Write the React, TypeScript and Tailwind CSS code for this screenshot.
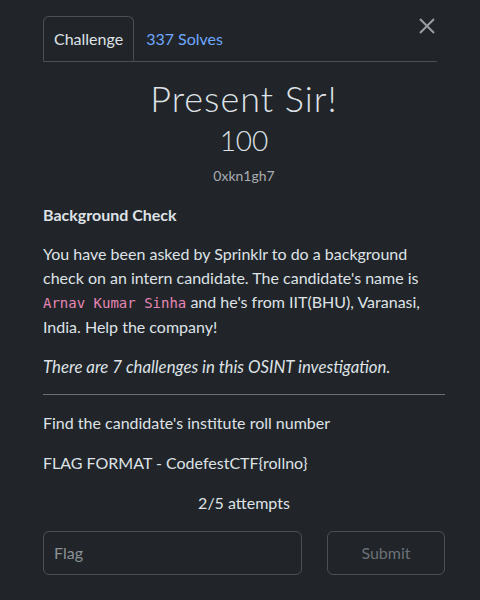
export default function App() {
  return (
    <div
      className="relative w-[480px] h-[600px] bg-[#212529] text-[#dee2e6] pl-[43px] pr-[35px] overflow-hidden"
      style={{ fontFamily: "Lato, 'Noto Sans', sans-serif" }}
    >
      <button className="absolute left-[419px] top-[18px] w-4 h-4 text-[#9a9da1]">
        <svg viewBox="0 0 16 16" width="16" height="16" fill="none" stroke="currentColor" strokeWidth="2">
          <path d="M1 1L15 15M15 1L1 15" />
        </svg>
      </button>

      <ul className="flex pt-4 mr-[8px] border-b border-[#495057]">
        <li className="-mb-px h-[45px] px-[10px] flex items-center border border-[#495057] border-b-[#212529] rounded-t-md text-[16px] text-[#dee2e6]">
          Challenge
        </li>
        <li className="h-[45px] px-[12px] flex items-center text-[16px] text-[#6ea8fe]">
          337 Solves
        </li>
      </ul>

      <h3 className="mt-[15px] text-center text-[36px] leading-[43px] font-light tracking-[1px]">
        Present Sir!
      </h3>
      <h4 className="mt-[3px] text-center text-[28px] leading-[34px] font-light">100</h4>
      <p className="mt-[9px] text-center text-[14px] leading-[20px] text-[#a9adb2]">0xkn1gh7</p>

      <p className="mt-[17px] text-[16px] leading-[24px] font-bold">Background Check</p>
      <p className="mt-[15px] text-[16px] leading-[24px]">
        You have been asked by Sprinklr to do a background check on an intern candidate. The
        candidate's name is{" "}
        <code className="text-[14px] text-[#e685b5]" style={{ fontFamily: "'DejaVu Sans Mono', monospace" }}>
          Arnav Kumar Sinha
        </code>{" "}
        and he's from IIT(BHU), Varanasi, India. Help the company!
      </p>
      <p className="mt-4 text-[16.8px] leading-[24px] italic">
        There are 7 challenges in this OSINT investigation.
      </p>

      <hr className="mt-[15px] border-t border-[#6c7075]" />

      <p className="mt-4 text-[16px] leading-[24px]">Find the candidate's institute roll number</p>
      <p className="mt-4 text-[16px] leading-[24px]">FLAG FORMAT - CodefestCTF{"{rollno}"}</p>
      <p className="mt-4 text-center text-[16px] leading-[24px]">2/5 attempts</p>

      <div className="mt-[16px] flex gap-[25px]">
        <div className="w-[259px] h-[44px] border border-[#495057] rounded-md flex items-center px-[10px] text-[16px] text-[#8b9095]">
          Flag
        </div>
        <button className="w-[118px] h-[44px] border border-[#495057] rounded-md text-[16px] text-[#6c7177]">
          Submit
        </button>
      </div>
    </div>
  );
}
